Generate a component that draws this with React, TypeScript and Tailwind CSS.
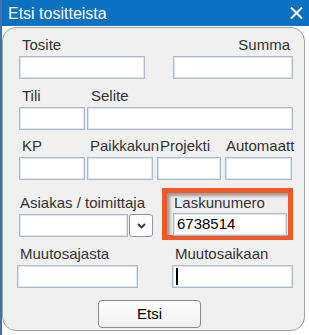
import React from "react";

const font = { fontFamily: '"Liberation Sans", Arial, sans-serif' };

function Input({ className = "", value, caret }: { className?: string; value?: string; caret?: boolean }) {
  return (
    <div
      className={`h-[23px] bg-white border border-[#adbacb] shadow-[inset_0_0_0_1px_#dbe5f1] flex items-center px-[3px] text-[15px] text-black ${className}`}
    >
      {value}
      {caret && <span className="w-[2px] h-[17px] bg-black" />}
    </div>
  );
}

function Label({ children, className = "" }: { children: React.ReactNode; className?: string }) {
  return (
    <div className={`text-[15px] leading-[17px] mb-[3px] text-[#333] whitespace-nowrap ${className}`}>
      {children}
    </div>
  );
}

export default function App() {
  return (
    <div className="w-[309px] h-[335px] bg-white border-l-2 border-[#3f73b0] overflow-hidden" style={font}>
      {/* title bar */}
      <div className="h-[26px] bg-[#0a71c0] flex items-center justify-between pl-[6px] pr-[6px] -ml-[2px] pt-[1px]">
        <span className="text-white text-[16px] ml-[2px]">Etsi tositteista</span>
        <svg width="13" height="12" viewBox="0 0 13 12" className="mb-[1px]">
          <path d="M1 0.5 L12 11.5 M12 0.5 L1 11.5" stroke="white" strokeWidth="2" />
        </svg>
      </div>

      {/* panel */}
      <div className="mt-[1px] w-[303px] h-[304px] bg-[#f0f0f0] border border-[#a3a3a3] rounded-[14px] pt-[8px]">
        {/* row 1 */}
        <div className="flex ml-[16px]">
          <div className="w-[126px]">
            <Label className="pl-[3px]">Tosite</Label>
            <Input />
          </div>
          <div className="w-[120px] ml-[28px]">
            <Label className="text-right pr-[3px]">Summa</Label>
            <Input />
          </div>
        </div>

        {/* row 2 */}
        <div className="flex ml-[16px] mt-[8px]">
          <div className="w-[66px]">
            <Label className="pl-[3px]">Tili</Label>
            <Input />
          </div>
          <div className="w-[206px] ml-[2px]">
            <Label className="pl-[4px]">Selite</Label>
            <Input />
          </div>
        </div>

        {/* row 3: labels cut short as in the original dialog */}
        <div className="flex ml-[16px] mt-[7px]">
          <div className="w-[68px]">
            <Label className="pl-[3px]">KP</Label>
            <Input className="w-[66px]" />
          </div>
          <div className="w-[70px]">
            <Label className="pl-[3px]">Paikkakun</Label>
            <Input className="w-[66px]" />
          </div>
          <div className="w-[68px]">
            <Label className="pl-[3px]">Projekti</Label>
            <Input className="w-[64px]" />
          </div>
          <div className="w-[67px]">
            <Label className="pl-[1px]">Automaatt</Label>
            <Input className="w-[67px]" />
          </div>
        </div>

        {/* row 4 */}
        <div className="flex items-end ml-[16px] mt-[8px]">
          <div>
            <Label className="pl-[1px]">Asiakas / toimittaja</Label>
            <div className="flex">
              <Input className="w-[109px]" />
              <button className="ml-[1px] w-[24px] h-[23px] bg-white border border-[#8796ab] rounded-[3px] flex items-center justify-center">
                <svg width="9" height="6" viewBox="0 0 9 6">
                  <path d="M1 1 L4.5 4.5 L8 1" stroke="#333" strokeWidth="1.8" fill="none" />
                </svg>
              </button>
            </div>
          </div>
          <div className="ml-[9px] -mb-[3px] w-[131px] h-[52px] border-[5px] border-[#f2592a]">
            <div className="h-full bg-[#eeeeee] shadow-[inset_3px_3px_3px_rgba(0,0,0,0.35)] pl-[6px] pr-[1px] pt-[1px]">
              <div className="text-[15px] leading-[17px] mb-[2px] text-[#333] pl-[1px]">Laskunumero</div>
              <Input className="h-[22px] w-[114px]" value="6738514" />
            </div>
          </div>
        </div>

        {/* row 5 */}
        <div className="flex ml-[14px] mt-[8px]">
          <div className="w-[121px]">
            <Label className="pl-[3px]">Muutosajasta</Label>
            <Input />
          </div>
          <div className="w-[121px] ml-[34px]">
            <Label className="pl-[3px]">Muutosaikaan</Label>
            <Input caret />
          </div>
        </div>

        {/* search button */}
        <div className="mt-[12px] ml-[95px]">
          <button className="w-[103px] h-[28px] rounded-[4px] border border-[#8c8c8c] bg-gradient-to-b from-white to-[#efefef] text-[15px] text-black">
            Etsi
          </button>
        </div>
      </div>
    </div>
  );
}
